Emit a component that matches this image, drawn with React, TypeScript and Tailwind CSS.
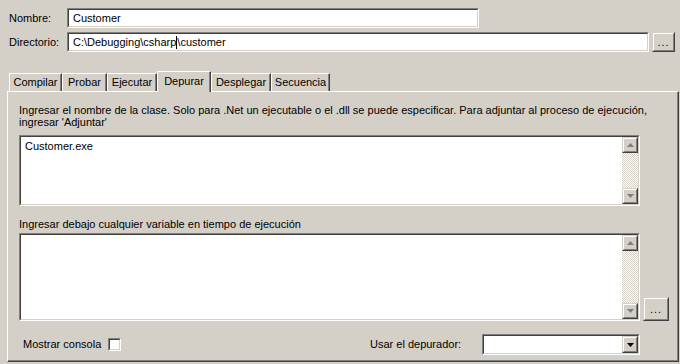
import type { ReactNode } from "react";

const tabs = [
  { label: "Compilar", w: "w-[53px]" },
  { label: "Probar", w: "w-[45px]" },
  { label: "Ejecutar", w: "w-[50px]" },
  { label: "Depurar", w: "w-[54px]", active: true },
  { label: "Desplegar", w: "w-[60px]" },
  { label: "Secuencia", w: "w-[59px]" },
];

function Sunken({ className, children }: { className: string; children?: ReactNode }) {
  return (
    <div className={`border border-t-[#808080] border-l-[#808080] border-b-white border-r-white ${className}`}>
      <div className="h-full w-full border border-t-[#404040] border-l-[#404040] border-b-[#D4D0C8] border-r-[#D4D0C8] bg-white">
        {children}
      </div>
    </div>
  );
}

function Raised({ className, children }: { className: string; children?: ReactNode }) {
  return (
    <div className={`border border-t-[#D4D0C8] border-l-[#D4D0C8] border-b-[#404040] border-r-[#404040] ${className}`}>
      <div className="flex h-full w-full items-center justify-center border border-t-white border-l-white border-b-[#808080] border-r-[#808080] bg-[#D4D0C8]">
        {children}
      </div>
    </div>
  );
}

function Arrow({ up, color }: { up?: boolean; color: string }) {
  return (
    <svg width="7" height="4" viewBox="0 0 7 4">
      {up ? <path d="M3.5 0 L7 4 L0 4 Z" fill={color} /> : <path d="M0 0 L7 0 L3.5 4 Z" fill={color} />}
    </svg>
  );
}

function Scrollbar() {
  return (
    <div className="flex h-full w-[16px] flex-col">
      <Raised className="h-[16px] w-[16px]">
        <Arrow up color="#808080" />
      </Raised>
      <div className="flex-1 bg-[repeating-conic-gradient(#D4D0C8_0_25%,#ffffff_0_50%)] bg-[length:2px_2px]" />
      <Raised className="h-[16px] w-[16px]">
        <Arrow color="#808080" />
      </Raised>
    </div>
  );
}

function Dots() {
  return <span className="leading-none tracking-[1px]">...</span>;
}

export default function App() {
  return (
    <div className="h-[364px] w-[680px] overflow-hidden bg-[#D4D0C8] font-['Liberation_Sans',Arial,sans-serif] text-[11px] leading-[13px] text-black">
      {/* Nombre */}
      <div className="flex items-center pt-[8px]">
        <span className="w-[67px] pl-[9px]">Nombre:</span>
        <Sunken className="h-[20px] w-[412px]">
          <div className="flex h-full items-center pl-[4px]">Customer</div>
        </Sunken>
      </div>

      {/* Directorio */}
      <div className="mt-[4px] flex items-center">
        <span className="w-[67px] pl-[9px]">Directorio:</span>
        <Sunken className="h-[20px] w-[582px]">
          <div className="flex h-full items-center pl-[4px]">
            C:\Debugging\csharp
            <span className="inline-block h-[13px] w-[1px] bg-black" />
            \customer
          </div>
        </Sunken>
        <Raised className="ml-[3px] h-[20px] w-[23px]">
          <Dots />
        </Raised>
      </div>

      {/* Tabs */}
      <div className="mt-[19px] flex h-[20px] items-end pl-[9px]">
        {tabs.map((t) =>
          t.active ? (
            <div
              key={t.label}
              className={`relative z-10 -mb-px flex h-[21px] ${t.w} items-start justify-center border-l border-t border-r border-l-white border-t-white border-r-[#404040] bg-[#D4D0C8] pt-[3px] shadow-[inset_-1px_0_#808080]`}
            >
              {t.label}
            </div>
          ) : (
            <div
              key={t.label}
              className={`flex h-[18px] ${t.w} items-center justify-center border-l border-t border-r border-l-white border-t-white border-r-[#404040] shadow-[inset_-1px_0_#808080]`}
            >
              {t.label}
            </div>
          )
        )}
      </div>

      {/* Panel */}
      <div className="ml-[7px] h-[271px] w-[672px] border border-t-white border-l-white border-b-[#404040] border-r-[#404040]">
        <div className="h-full w-full border-b border-r border-b-[#808080] border-r-[#808080] pl-[11px]">
          <p className="pt-[12px] leading-[12px]">
            Ingresar el nombre de la clase. Solo para .Net un ejecutable o el .dll se puede especificar. Para adjuntar al proceso de ejecución,
            <br />
            ingresar 'Adjuntar'
          </p>

          <Sunken className="mt-[7px] h-[71px] w-[621px]">
            <div className="flex h-full">
              <div className="flex-1 pl-[4px] pt-[3px]">Customer.exe</div>
              <Scrollbar />
            </div>
          </Sunken>

          <p className="mt-[12px] leading-[12px]">Ingresar debajo cualquier variable en tiempo de ejecución</p>

          <div className="mt-[3px] flex items-end">
            <Sunken className="h-[88px] w-[621px]">
              <div className="flex h-full">
                <div className="flex-1" />
                <Scrollbar />
              </div>
            </Sunken>
            <Raised className="ml-[3px] h-[24px] w-[26px]">
              <Dots />
            </Raised>
          </div>

          <div className="mt-[13px] flex h-[21px] items-center">
            <span className="ml-[4px] w-[85px]">Mostrar consola</span>
            <Sunken className="h-[13px] w-[13px]" />
            <span className="ml-[249px] w-[112px]">Usar el depurador:</span>
            <Sunken className="h-[21px] w-[158px]">
              <div className="flex h-full justify-end">
                <Raised className="h-full w-[16px]">
                  <Arrow color="#000000" />
                </Raised>
              </div>
            </Sunken>
          </div>
        </div>
      </div>
    </div>
  );
}
